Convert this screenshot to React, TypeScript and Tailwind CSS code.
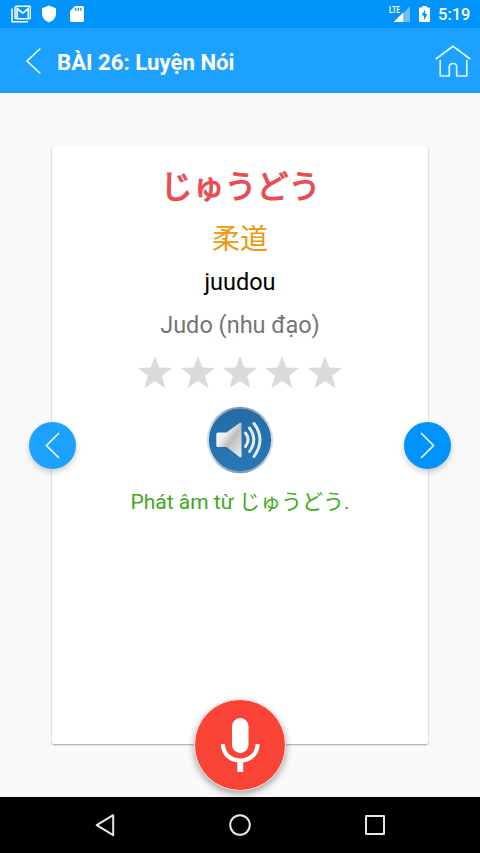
import React from "react";

const latin = "font-[Roboto,'Noto_Sans_CJK_JP',sans-serif]";

function StatusBar() {
  return (
    <div className="flex h-7 shrink-0 items-center bg-[#0094fb] text-white">
      <svg className="ml-[11px] h-[18px] w-5" viewBox="0 0 20 18" fill="none">
        <path d="M1 3.5V16.7H17" stroke="#fff" strokeWidth="1.5" />
        <rect x="4" y="1.2" width="15.5" height="12.6" rx="1.3" stroke="#fff" strokeWidth="1.4" />
        <path d="M6.2 13V3.6L11.8 8.2L17.3 3.6V13" stroke="#fff" strokeWidth="1.8" />
      </svg>
      <svg className="ml-[11px] h-[18px] w-[14px]" viewBox="0 0 14 18">
        <path d="M7 .5L14 3.2V8.5C14 12.8 11 16.2 7 17.4C3 16.2 0 12.8 0 8.5V3.2Z" fill="#fff" />
      </svg>
      <svg className="ml-[14px] h-[18px] w-[14px]" viewBox="0 0 14 18">
        <path d="M5 1H12.4Q14 1 14 2.5V15.6Q14 17 12.6 17H1.5Q0 17 0 15.6V6Z" fill="#fff" />
        <path d="M5.7 2.7V5.7M8.3 2.7V5.7M10.9 2.7V5.7" stroke="#0094fb" strokeWidth="1.3" />
      </svg>
      <svg className="ml-auto h-[18px] w-[22px]" viewBox="0 0 22 18">
        <path d="M15 7.4L21 1V17H15Z" fill="#69c0fd" />
        <path d="M4.5 17L14.5 7.2V17Z" fill="#fff" />
        <text x="0" y="8.4" fill="#fff" fontFamily="Roboto" fontWeight="700" fontSize="9.8" textLength="11" lengthAdjust="spacingAndGlyphs">LTE</text>
      </svg>
      <svg className="ml-[8px] h-[18px] w-[11px]" viewBox="0 0 11 18">
        <path d="M3.3 1H7.7V2.5H10Q11 2.5 11 3.5V16Q11 17 10 17H1Q0 17 0 16V3.5Q0 2.5 1 2.5H3.3Z" fill="#fff" />
        <path d="M6.2 4.5L2.6 10.6H5V15L8.5 8.9H6.2Z" fill="#0094fb" />
      </svg>
      <span className="ml-[8px] w-[42px] pt-[2px] text-[16.5px] font-medium leading-7">5:19</span>
    </div>
  );
}

function AppBar() {
  return (
    <header className="flex h-[65px] shrink-0 items-center bg-[#1da1ff] text-white">
      <svg className="ml-[25px] h-[26px] w-[17px]" viewBox="0 0 17 26" fill="none">
        <path d="M14.8 1L2 13L14.8 25" stroke="#e9fbff" strokeWidth="1.7" strokeLinecap="round" />
      </svg>
      <h1 className="ml-[15px] pt-[3px] text-[22.2px] font-bold leading-7">BÀI 26: Luyện Nói</h1>
      <svg className="ml-auto mr-[9px] h-[34px] w-[36px]" viewBox="0 0 36 34" fill="none" stroke="#e0f9ff" strokeWidth="1.7" strokeLinecap="round" strokeLinejoin="round">
        <path d="M1.2 14.8L18 2.2L34.8 14.8" />
        <path d="M5.2 16.5V32H14.3V23.2Q14.3 19.5 18 19.5Q21.7 19.5 21.7 23.2V32H31.8V16.5" />
      </svg>
    </header>
  );
}

function Star() {
  return (
    <svg className="h-[34px] w-[34px]" viewBox="0 0 34 34">
      <path d="M17 1L21.3 12.4L34 13L24.1 20.7L27.4 33L17 26.1L6.6 33L9.9 20.7L0 13L12.7 12.4Z" fill="#dadada" />
    </svg>
  );
}

function Speaker() {
  return (
    <svg className="h-[68px] w-[68px]" viewBox="0 0 68 68" fill="none">
      <defs>
        <linearGradient id="disc" x1="0" y1="0" x2="0" y2="1">
          <stop offset="0" stopColor="#236ba7" />
          <stop offset="1" stopColor="#2878b5" />
        </linearGradient>
        <linearGradient id="rim" x1="0" y1="0" x2="0" y2="1">
          <stop offset="0" stopColor="#8494a6" />
          <stop offset=".3" stopColor="#d3dfea" />
          <stop offset=".75" stopColor="#d3dfea" />
          <stop offset="1" stopColor="#8296a6" />
        </linearGradient>
        <linearGradient id="horn" x1="0" y1="0" x2="1" y2="1">
          <stop offset="0" stopColor="#fff" />
          <stop offset=".35" stopColor="#eee" />
          <stop offset=".55" stopColor="#bdbdbd" />
          <stop offset="1" stopColor="#f2f2f2" />
        </linearGradient>
      </defs>
      <circle cx="34" cy="34" r="33.2" fill="url(#rim)" />
      <circle cx="34" cy="34" r="31.2" fill="url(#disc)" />
      <path d="M12 26.5Q10.3 26.5 10.3 28V39.5Q10.3 41 12 41H20.5L33.5 51Q35.5 52 35.5 50V18Q35.5 16 33.5 17L20.5 26.5Z" fill="url(#horn)" />
      <g stroke="#e3e9ef" strokeWidth="3" strokeLinecap="round">
        <path d="M39.5 27Q44.5 33.5 39.5 40.5" />
        <path d="M43.5 22Q52 33.5 43.5 45.5" />
        <path d="M48 17.5Q60 33.5 48 50.5" />
      </g>
    </svg>
  );
}

function Arrow({ right = false }: { right?: boolean }) {
  return (
    <button
      className={
        right
          ? "absolute right-[-23px] top-[276px] flex size-[47px] items-center justify-center rounded-full bg-[#0094fb] shadow-[0_3px_6px_rgba(0,0,0,0.2)]"
          : "absolute left-[-23px] top-[276px] flex size-[47px] items-center justify-center rounded-full bg-[#1da1ff] shadow-[0_3px_6px_rgba(0,0,0,0.2)]"
      }
    >
      <svg className="h-[27px] w-[15px]" viewBox="0 0 15 27" fill="none" stroke="#e9fbff" strokeWidth="1.7" strokeLinecap="round">
        <path d={right ? "M1.5 1.5L13.5 13.5L1.5 25.5" : "M13.5 1.5L1.5 13.5L13.5 25.5"} />
      </svg>
    </button>
  );
}

function MicButton() {
  return (
    <button className="absolute left-[142px] top-[553px] flex size-[92px] items-center justify-center rounded-full border-[1.5px] border-[#fde4df] bg-[#f84336] shadow-[0_3px_7px_rgba(0,0,0,0.35)]">
      <svg className="h-[56px] w-[40px]" viewBox="0 0 40 56" fill="none">
        <rect x="12" y="1" width="16.5" height="35" rx="8.2" fill="#fff" />
        <path d="M2.8 27C3.5 38 11 43.5 20.2 43.5C29.5 43.5 37 38 37.7 27" stroke="#fff" strokeWidth="4.2" />
        <path d="M20.2 42V55" stroke="#fff" strokeWidth="6" />
      </svg>
    </button>
  );
}

function NavBar() {
  return (
    <nav className="flex h-14 shrink-0 items-center justify-between bg-black pl-[94px] pr-[94px]">
      <svg className="h-[24px] w-[22px]" viewBox="0 0 22 24" fill="none" stroke="#e6e6e6" strokeWidth="2" strokeLinejoin="round">
        <path d="M2.7 12.2L19.2 2.2V22.2Z" />
      </svg>
      <svg className="h-6 w-6" viewBox="0 0 24 24" fill="none" stroke="#e6e6e6" strokeWidth="2">
        <circle cx="12" cy="12" r="9.8" />
      </svg>
      <svg className="h-[22px] w-[22px]" viewBox="0 0 22 22" fill="none" stroke="#e6e6e6" strokeWidth="2" strokeLinejoin="round">
        <rect x="2" y="2" width="18" height="18" />
      </svg>
    </nav>
  );
}

export default function App() {
  return (
    <div className={`flex h-[853px] w-[480px] flex-col overflow-hidden bg-[#fafafa] ${latin}`}>
      <StatusBar />
      <AppBar />
      <main className="flex min-h-0 flex-1 justify-center pt-[53px]">
        <section className="relative flex h-[598px] w-[376px] flex-col items-center rounded-[2px] bg-white pt-[17px] shadow-[0_1px_2px_rgba(0,0,0,0.35)]">
          <p className="h-12 pl-px text-[32px] font-normal leading-[49px] text-[#ea4c53] [-webkit-text-stroke:1.2px_#ea4c53]">じゅうどう</p>
          <p className="mt-[7px] h-[42px] text-[28px] leading-[44px] text-[#ee990f]">柔道</p>
          <p className="mt-2 h-7 text-[23.5px] leading-7 text-black">juudou</p>
          <p className="mt-[15px] h-7 text-[23.5px] leading-7 text-[#757575]">Judo (nhu đạo)</p>
          <div className="mt-[16px] flex gap-[8.3px]">
            <Star />
            <Star />
            <Star />
            <Star />
            <Star />
          </div>
          <button className="mt-[17px]">
            <Speaker />
          </button>
          <p className="mt-[13px] h-[30px] whitespace-nowrap text-[21px] leading-[30px] text-[#3dab1c]">Phát âm từ じゅうどう.</p>
          <Arrow />
          <Arrow right />
          <MicButton />
        </section>
      </main>
      <NavBar />
    </div>
  );
}
